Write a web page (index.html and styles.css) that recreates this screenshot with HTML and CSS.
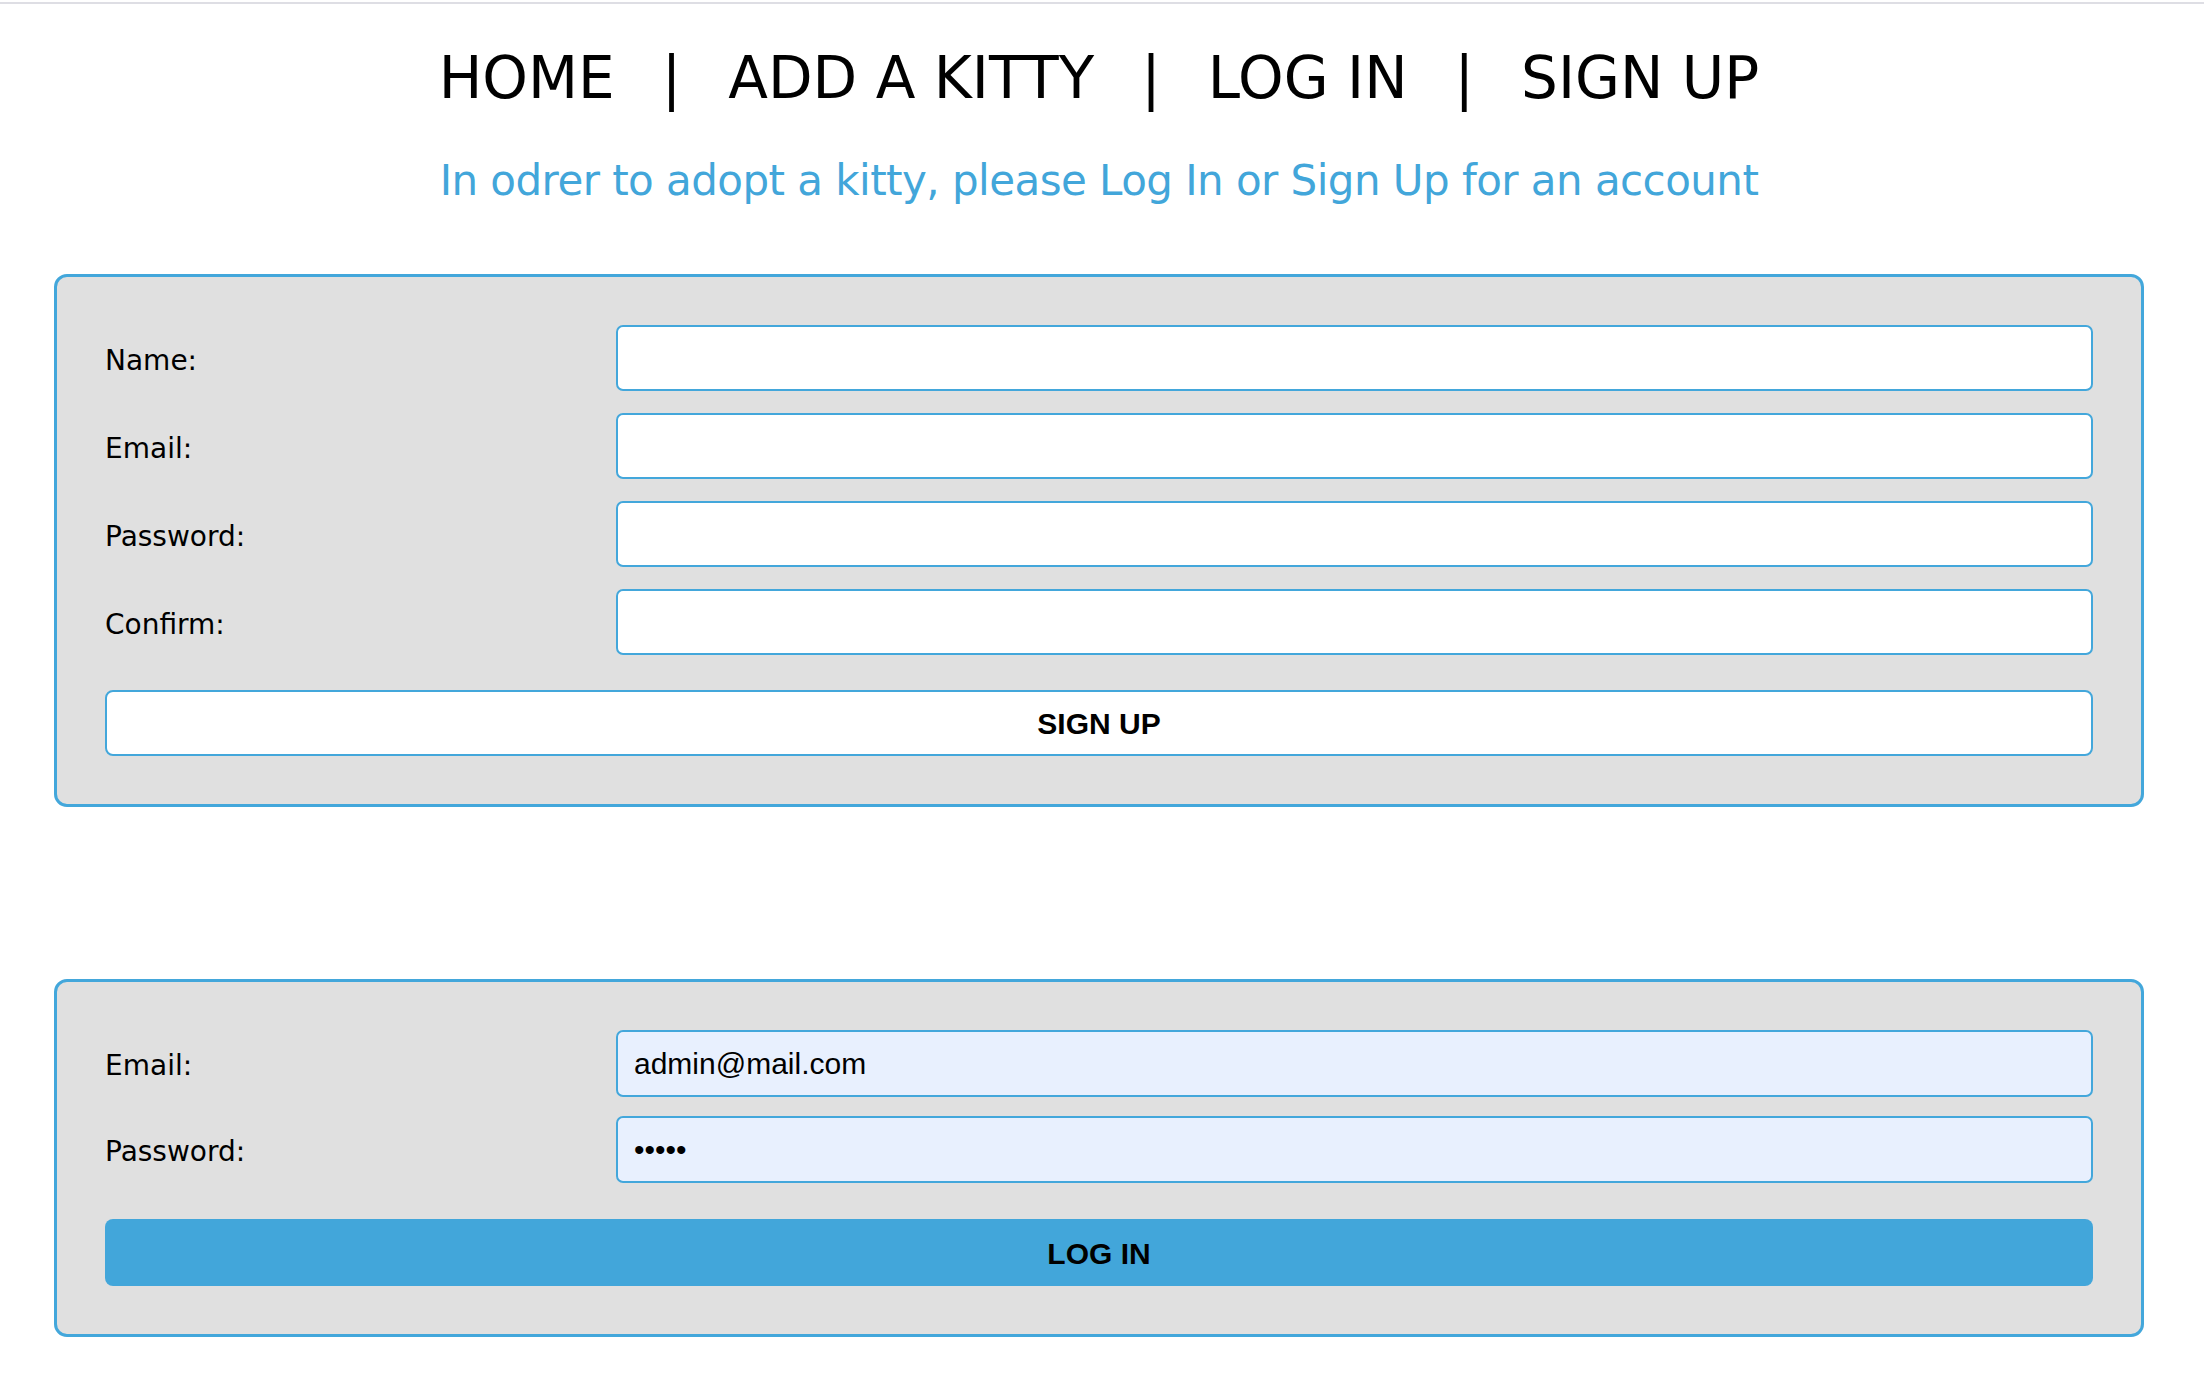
FILE: index.html
```html
<!DOCTYPE html>
<html lang="en">
<head>
<meta charset="utf-8">
<title>Kitty Adoption</title>
<link rel="stylesheet" href="styles.css">
</head>
<body>
<div class="topline"></div>
<div class="page">
  <nav class="nav">
    <a href="#">HOME</a><span class="sep">|</span>
    <a href="#">ADD A KITTY</a><span class="sep">|</span>
    <a href="#">LOG IN</a><span class="sep">|</span>
    <a href="#">SIGN UP</a>
  </nav>
  <p class="subtitle">In odrer to adopt a kitty, please Log In or Sign Up for an account</p>

  <form class="panel panel-signup">
    <div class="rows">
      <div class="row"><label class="label">Name:</label><input class="field" type="text"></div>
      <div class="row"><label class="label">Email:</label><input class="field" type="text"></div>
      <div class="row"><label class="label">Password:</label><input class="field" type="password"></div>
      <div class="row"><label class="label">Confirm:</label><input class="field" type="password"></div>
    </div>
    <button type="button" class="btn btn-outline">SIGN UP</button>
  </form>

  <form class="panel panel-login">
    <div class="rows">
      <div class="row"><label class="label">Email:</label><input class="field field-filled" type="text" value="admin@mail.com"></div>
      <div class="row"><label class="label">Password:</label><input class="field field-filled" type="password" value="admin"></div>
    </div>
    <button type="button" class="btn btn-primary">LOG IN</button>
  </form>
</div>
</body>
</html>
```
FILE: styles.css
```css
html, body {
  margin: 0;
  padding: 0;
  background: #ffffff;
}

.topline {
  margin-top: 2px;
  height: 2px;
  background: #dedee4;
}

.page {
  margin: 0 60px 0 54px;
}

.nav {
  margin-top: 40px;
  display: flex;
  justify-content: center;
  gap: 47px;
  font-family: "DejaVu Sans", sans-serif;
  font-size: 58px;
  line-height: 68px;
  color: #000;
}

.nav a {
  color: #000;
  text-decoration: none;
}

.sep {
  color: #000;
}

.subtitle {
  margin: 44px 0 0;
  text-align: center;
  font-family: "DejaVu Sans", sans-serif;
  font-size: 42px;
  line-height: 49px;
  letter-spacing: -0.55px;
  color: #42a6da;
}

.panel {
  display: flex;
  flex-direction: column;
  background: #e0e0e0;
  border: 3px solid #43a7db;
  border-radius: 13px;
  padding: 48px;
}

.panel-signup {
  margin-top: 69px;
  gap: 35px;
}

.panel-login {
  margin-top: 172px;
  gap: 36px;
}

.rows {
  display: flex;
  flex-direction: column;
  gap: 22px;
}

.panel-login .rows {
  gap: 19px;
}

.row {
  display: grid;
  grid-template-columns: 511px 1fr;
  align-items: center;
  height: 66px;
}

.panel-login .row {
  height: 67px;
}

.label {
  font-family: "DejaVu Sans", sans-serif;
  font-size: 28px;
  color: #000;
  padding-top: 4px;
}

.field {
  box-sizing: border-box;
  height: 100%;
  width: 100%;
  margin: 0;
  padding: 0 16px;
  border: 2px solid #43a7db;
  border-radius: 7px;
  background: #ffffff;
  font-family: "Liberation Sans", Arial, sans-serif;
  font-size: 30px;
  color: #000;
  outline: none;
}

.field-filled {
  background: #e8f0fe;
}

.btn {
  box-sizing: border-box;
  height: 67px;
  width: 100%;
  margin: 0;
  padding-top: 3px;
  border-radius: 8px;
  font-family: "Liberation Sans", Arial, sans-serif;
  font-size: 30px;
  font-weight: bold;
  color: #000;
  cursor: pointer;
}

.btn-outline {
  height: 66px;
  background: #ffffff;
  border: 2px solid #43a7db;
}

.btn-primary {
  background: #42a6da;
  border: none;
}
```
